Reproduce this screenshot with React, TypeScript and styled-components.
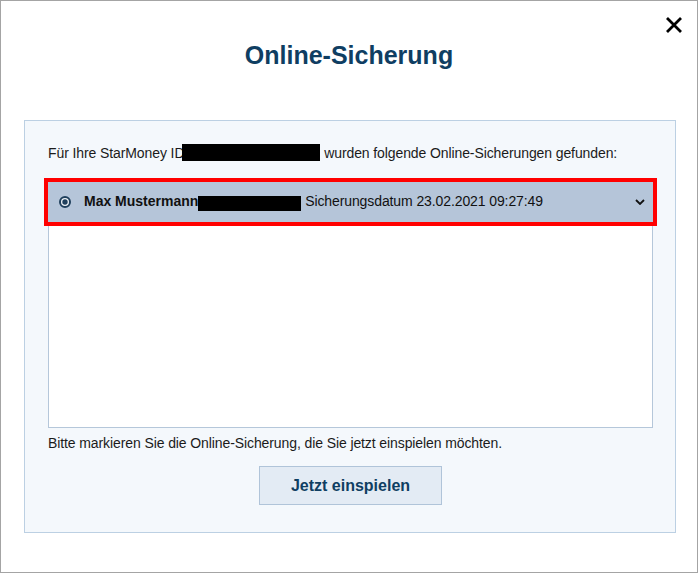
import { createGlobalStyle, styled } from "styled-components";

const GlobalStyle = createGlobalStyle`
  html, body {
    margin: 0;
    padding: 0;
    background: #fff;
  }
  body {
    font-family: "Liberation Sans", Arial, sans-serif;
  }
`;

const Window = styled.div`
  width: 698px;
  height: 573px;
  box-sizing: border-box;
  border: 1px solid #a4a4a4;
  background: #fff;
  display: flex;
  flex-direction: column;
`;

const Header = styled.header`
  height: 119px;
  display: grid;
  grid-template-columns: 1fr auto 1fr;
  align-items: start;
`;

const Title = styled.h1`
  grid-column: 2;
  margin: 40px 0 0;
  font-size: 25px;
  line-height: 29px;
  font-weight: 700;
  color: #0f3e62;
`;

const Close = styled.button`
  grid-column: 3;
  justify-self: end;
  margin: 15px 14px 0 0;
  width: 18px;
  height: 18px;
  padding: 0;
  border: 0;
  background: none;
  display: flex;
  cursor: pointer;
`;

const Panel = styled.section`
  margin-left: 23px;
  width: 652px;
  height: 413px;
  box-sizing: border-box;
  border: 1px solid #bcd0e3;
  background: #f4f8fc;
  padding: 23px 22px 0 23px;
  display: flex;
  flex-direction: column;
`;

const Text = styled.p<{ $gap?: number }>`
  margin: ${(p) => p.$gap ?? 0}px 0 0;
  font-size: 14px;
  line-height: 16px;
  letter-spacing: -0.1px;
  color: #1b1b1b;
  white-space: nowrap;
`;

const Redacted = styled.span<{ $w: number; $h: number; $drop: number }>`
  display: inline-block;
  width: ${(p) => p.$w}px;
  height: ${(p) => p.$h}px;
  background: #000;
  vertical-align: -${(p) => p.$drop}px;
`;

const List = styled.div`
  margin-top: 21px;
  height: 246px;
  box-sizing: border-box;
  border: 1px solid #b5c7da;
  background: #fff;
`;

const Row = styled.div<{ $marked?: boolean }>`
  margin: -1px -1px 0;
  height: 40px;
  box-sizing: border-box;
  background: #b5c5d9;
  outline: ${(p) => (p.$marked ? "4px solid #ff0000" : "none")};
  display: flex;
  align-items: center;
  padding: 0 8px 0 11px;
  gap: 13px;
  font-size: 14px;
  line-height: 16px;
  letter-spacing: -0.1px;
  color: #111;
`;

const RowText = styled.span`
  flex: 1;
  white-space: nowrap;
`;

const Name = styled.b`
  font-weight: 700;
  letter-spacing: 0;
`;

const Submit = styled.button`
  align-self: center;
  margin-top: 15px;
  width: 183px;
  height: 39px;
  box-sizing: border-box;
  border: 1px solid #b0c4d9;
  background: #e3ebf4;
  font-family: "Liberation Sans", Arial, sans-serif;
  font-size: 16px;
  font-weight: 700;
  color: #0f3e62;
  cursor: pointer;
`;

function Radio() {
  return (
    <svg width="12" height="12" viewBox="0 0 12 12">
      <circle cx="6" cy="6" r="5" fill="#edf2f7" stroke="#1f3f5c" strokeWidth="2" />
      <circle cx="6" cy="6" r="2.7" fill="#1f3f5c" />
    </svg>
  );
}

export default function App() {
  return (
    <>
      <GlobalStyle />
      <Window>
        <Header>
          <Title>Online-Sicherung</Title>
          <Close aria-label="Schließen">
            <svg width="18" height="18" viewBox="0 0 18 18">
              <path d="M2 2 L16 16 M16 2 L2 16" stroke="#000" strokeWidth="2.8" />
            </svg>
          </Close>
        </Header>
        <Panel>
          <Text>
            Für Ihre StarMoney ID
            <Redacted $w={138} $h={17} $drop={3} style={{ marginLeft: -2 }} /> wurden folgende
            Online-Sicherungen gefunden:
          </Text>
          <List>
            <Row $marked>
              <Radio />
              <RowText>
                <Name>Max Mustermann</Name>
                <Redacted $w={103} $h={15} $drop={5} /> Sicherungsdatum 23.02.2021 09:27:49
              </RowText>
              <svg width="10" height="6" viewBox="0 0 10 6">
                <path d="M1 1 L5 5 L9 1" fill="none" stroke="#111" strokeWidth="1.8" />
              </svg>
            </Row>
          </List>
          <Text $gap={7}>Bitte markieren Sie die Online-Sicherung, die Sie jetzt einspielen möchten.</Text>
          <Submit>Jetzt einspielen</Submit>
        </Panel>
      </Window>
    </>
  );
}
